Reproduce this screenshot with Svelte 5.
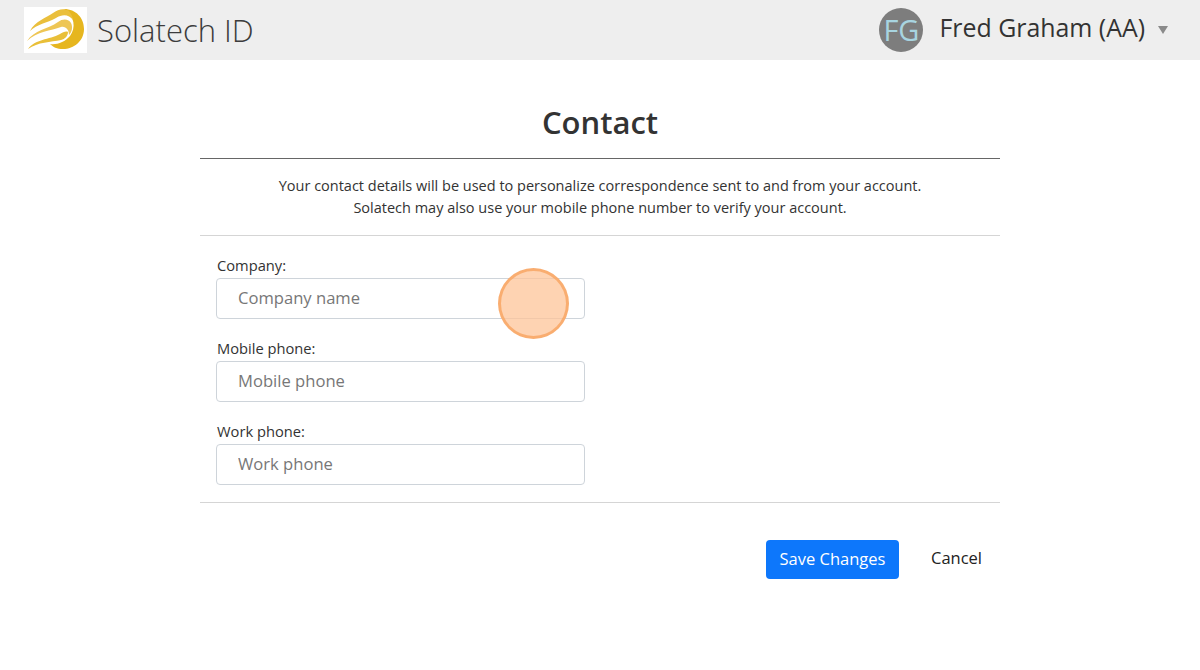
<script>
	const fields = [
		{ label: 'Company:', placeholder: 'Company name' },
		{ label: 'Mobile phone:', placeholder: 'Mobile phone' },
		{ label: 'Work phone:', placeholder: 'Work phone' }
	];
</script>

<header class="topbar">
	<div class="brand">
		<div class="logo">
			<svg width="63" height="46" viewBox="0 0 63 46" aria-hidden="true">
				<path d="M40 2 C52 2 60 11 60 22 C60 34 50 42 39 42 C33 42 29 40 26 37 C33 38 41 35 46 29 C52 21 51 9 40 2 Z" fill="#e6b61f" />
				<path d="M6 24 C11 14 22 11 29 6 C34 2 41 1 45 4 C47 7 49 10 49 13 C45 7 38 7 32 11 C23 16 13 17 6 24 Z" fill="#eabf3c" />
				<path d="M3 34 C10 23 24 22 34 15 C39 11 45 12 47 16 C49 20 48 25 45 28 C45 23 42 19 37 20 C27 24 13 24 3 34 Z" fill="#eec655" />
				<path d="M4 42 C11 32 25 33 36 27 C39 25 42 24 44 25 C44 29 41 32 37 33 C27 35 14 35 4 42 Z" fill="#e9bf38" />
			</svg>
		</div>
		<span class="brand-name">Solatech ID</span>
	</div>
	<div class="user">
		<div class="avatar">FG</div>
		<span class="user-name">Fred Graham (AA)</span>
		<span class="caret"></span>
	</div>
</header>

<main class="page">
	<h1>Contact</h1>
	<p class="intro">
		Your contact details will be used to personalize correspondence sent to and from your account.<br />
		Solatech may also use your mobile phone number to verify your account.
	</p>
	<form class="fields">
		{#each fields as field}
			<label class="field">
				<span>{field.label}</span>
				<input type="text" placeholder={field.placeholder} />
			</label>
		{/each}
	</form>
	<div class="actions">
		<button type="button" class="save">Save Changes</button>
		<button type="button" class="cancel">Cancel</button>
	</div>
</main>

<div class="click-marker"></div>

<style>
	:global(body) {
		margin: 0;
		background: #fff;
		font-family: 'Open Sans', 'Noto Sans', sans-serif;
		color: #333;
	}

	.topbar {
		height: 60px;
		background: #eeeeee;
		display: flex;
		align-items: center;
		justify-content: space-between;
		padding: 0 32px 0 24px;
	}

	.brand {
		display: flex;
		align-items: center;
		gap: 10px;
	}

	.logo {
		width: 63px;
		height: 46px;
		background: #fff;
		display: flex;
	}

	.brand-name {
		font-size: 31px;
		font-weight: 300;
		color: #3c3c3c;
		line-height: 46px;
	}

	.user {
		display: flex;
		align-items: center;
	}

	.avatar {
		width: 44px;
		height: 44px;
		border-radius: 50%;
		background: #7d7d7d;
		color: #a8d4e0;
		font-size: 29px;
		line-height: 44px;
		text-align: center;
		margin-right: 16px;
	}

	.user-name {
		font-size: 24.9px;
		color: #333;
		position: relative;
		top: -3px;
	}

	.caret {
		width: 0;
		height: 0;
		border-left: 5px solid transparent;
		border-right: 5px solid transparent;
		border-top: 8px solid #8a8a8a;
		margin-left: 13px;
	}

	.page {
		width: 800px;
		margin: 0 auto;
	}

	h1 {
		margin: 0;
		padding: 40px 0 14px;
		font-size: 31px;
		line-height: 44px;
		font-weight: 600;
		text-align: center;
		color: #333;
		border-bottom: 1px solid #666;
	}

	.intro {
		margin: 0;
		padding: 16px 0 16px;
		font-size: 14.5px;
		line-height: 22px;
		text-align: center;
		color: #333;
		border-bottom: 1px solid #d5d5d5;
	}

	.fields {
		display: flex;
		flex-direction: column;
		gap: 18px;
		padding: 18px 16px 17px;
		border-bottom: 1px solid #d5d5d5;
	}

	.field {
		display: flex;
		flex-direction: column;
		font-size: 14.7px;
		line-height: 22px;
		color: #333;
	}

	.field span {
		padding-left: 1px;
		margin-bottom: 2px;
	}

	.field input {
		box-sizing: border-box;
		width: 369px;
		height: 41px;
		padding: 0 21px 2px;
		border: 1px solid #ced4da;
		border-radius: 4px;
		background: #fff;
		font: inherit;
		font-size: 16.6px;
		color: #333;
	}

	.field input::placeholder {
		color: #777;
		opacity: 1;
	}

	.actions {
		display: flex;
		justify-content: flex-end;
		align-items: center;
		padding: 37px 18px 0 0;
	}

	.save {
		width: 133px;
		height: 39px;
		padding: 0 0 2px;
		border: none;
		border-radius: 4px;
		background: #0d77fb;
		color: #fff;
		font: inherit;
		font-size: 16.5px;
	}

	.cancel {
		border: none;
		background: none;
		padding: 0;
		margin-left: 32px;
		font: inherit;
		font-size: 16.5px;
		color: #222;
		position: relative;
		top: -2px;
	}

	.click-marker {
		position: absolute;
		left: 498px;
		top: 268px;
		width: 71px;
		height: 71px;
		box-sizing: border-box;
		border-radius: 50%;
		border: 3px solid rgba(248, 170, 105, 0.9);
		background: rgba(253, 196, 152, 0.75);
	}
</style>
